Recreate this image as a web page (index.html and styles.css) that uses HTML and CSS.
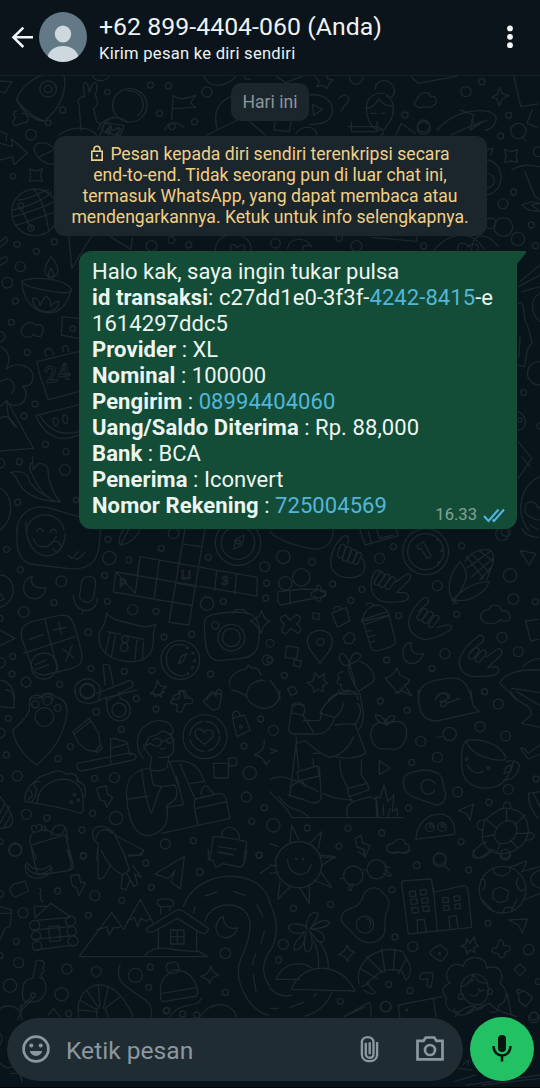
FILE: index.html
```html
<!DOCTYPE html>
<html lang="id">
<head>
<meta charset="utf-8">
<title>Chat</title>
<link rel="stylesheet" href="styles.css">
</head>
<body>
<div class="phone">
<svg class="wallpaper" viewBox="0 0 540 1088" aria-hidden="true">
<!-- top strip -->
<g transform="scale(.3444 .3333)">
<path d="M0 243l34 2-20 34-14-5M47 300c10-35 50-70 85-75 20-4 45-5 55 5 6 50-15 100-60 133Q90 350 47 300zM50 298c5 25 40 60 75 66M48 332c-12 5-8 18-2 22-12 6-10 20-2 24l20-8 15-4c6-10 0-30-15-25M235 390l-5-75c-8-10 0-28 15-24l-3-30c0-20 14-18 17 15l10-24c10-10 18 4 7 35 14 10 5 35-4 38l8 38c5 15 30 2 48-12M285 390c8-35 60-50 85-22M270 228c5 18 35 20 48 0M498 358l5-72c20 18 38 8 65 0l-15 22 15 14c-25 0-40 5-66 3M590 225c15 40 60 40 95 5M670 290c-45 20-50 60-38 100M480 390c5-30 40-25 55-5M712 228v10h15M800 228l30 20 50-20M915 230l12 15-8 15 20-4 10 10 8-18 10-8-16-4-4-10M1015 228c-3 30 35 36 40 0M900 285c35-5 65 15 65 45s-25 45-65 43M907 313l29 15-25 18zM985 295c15-22 36 0 25 10l-20 28M1065 310c15-40 65-42 75 0 10 40-20 85-40 80-25-5-40-40-35-80zM1090 268c-3-35 50-35 55 0 2 20-10 30-22 20M1060 325c20 5 35-20 40-28 10 15 25 22 42 22M1078 340h14m15 0h12M1210 300c10-30 40-25 40-10 20-10 20 25 10 25-10 15-25 5-28 5-20 10-40-10-22-20zM1194 230l20 20 115-22M1270 390c40-50 100-65 150-55 35 10 20 50-10 55M1335 330l40 15-10 45 35-25M1492 228l20 92 48-8M1545 330l-15 40 30 12M1450 262l10 20 18 5-20 10-8 20-8-20-14-5 16-8z"/>
<circle cx="140" cy="267" r="24"/><circle cx="140" cy="267" r="11"/><circle cx="312" cy="276" r="8"/><circle cx="377" cy="316" r="50"/><path d="M370 272c45 0 60 45 30 75"/><circle cx="437" cy="255" r="9"/><circle cx="489" cy="258" r="9"/><circle cx="182" cy="330" r="9"/><circle cx="463" cy="340" r="9"/><circle cx="565" cy="365" r="9"/><circle cx="601" cy="276" r="15"/><circle cx="1399" cy="245" r="9"/><circle cx="1353" cy="275" r="15"/><circle cx="1176" cy="345" r="9"/><circle cx="1230" cy="378" r="18"/><circle cx="1477" cy="346" r="9"/><circle cx="310" cy="385" r="14"/>
</g>
<!-- band around the notice -->
<g transform="translate(0 120) scale(.3444 .3333)">
<path d="M170 45C210 15 260 20 280 45M290 47l15-40 55 10-10 30M600 45L690 0M720 0l50 45M800 0l-5 30 45 5 5-30M860 40c20-30 60-20 60 5M1010 20h80c25 5 30 25 15 25M1020 5v30h75V5M1150 45l15-35 40 30M1310 45c25-15 80-35 105-45M1370 0l10 20 20-15M200 345l8 100 60-100M320 350l60 38 5-35M625 392c0-65 105-65 105 0M670 392c-5-25 15-20 18-8 15-18 30-5 20 8M835 385c5-35 55-35 70-5-20-10-30 0-25 12M1080 352l130 12v-14M1260 392c40-55 110-65 145-5M1330 392c-10-25 25-30 30-10 10-22 40-5 25 10"/>
<text x="303" y="42" font-size="34" transform="rotate(8 303 42)">4:2</text>
<circle cx="440" cy="378" r="16"/><circle cx="498" cy="360" r="10"/><circle cx="548" cy="375" r="9"/><circle cx="800" cy="370" r="14"/><circle cx="985" cy="355" r="9"/><circle cx="1035" cy="378" r="16"/><circle cx="1230" cy="378" r="9"/><circle cx="1230" cy="24" r="19"/><circle cx="140" cy="8" r="8"/><circle cx="500" cy="20" r="9"/>
</g>
<!-- left edge -->
<g transform="translate(0 70) scale(.3333)">
<path d="M0 220l38 10-4-24 48 42-40 36-4-24-38 10M0 183l20 10-2 18M102 240c0-30 40-25 60-5M102 240c10 30 40 45 58 42M116 262l44-22M88 297l19 6 20-6-5 19 5 19-20-4-19 4 4-18zM36 420c30-5 100-30 120-55M55 390c30 0 80-30 90-30M60 410c20 40 30 60 35 65M100 357c20 20 40 70 45 120M50 465c40-10 80-30 115-38M40 440c35-10 70-20 125-45M0 515l18-15 5 12-23 20M0 568l18-10 5 14-23 15M153 560c-20 30-28 55 0 62 30-6 25-35 0-62zM153 595c-12 20-8 30 0 35 10-6 12-18 0-35zM66 632c40-12 120-10 148 25 5 10-20 15-55 8-50-8-95-20-93-33zM66 632c0 70 50 100 90 96 30-5 50-35 58-70M98 685c15-5 20 10 22 22 5-12 12-25 20-28 12 12 15 20 12 30 8-12 15-15 25-14 0 20-20 32-40 30-25-3-40-20-39-40zM65 778c10-25 35-25 40-12 20-8 30 10 22 22 0 15-20 15-25 5-15 15-45 10-37-15zM235 745l-48-5-3 55 50 10M0 830c25 10 35 35 18 68 35-30 90-5 80 30-5 25-30 20-30 20 20 20 10 55-20 58-20 0-28-10-28-10M0 935c35-25 55 15 35 35M20 990l80 145-100 8M0 1010l20-18 5 50 20 30M0 1045c30-20 40 20 50 25M235 845l-125 30 8 35 27 80 90-25M140 860c-20-25 20-35 20-5M190 845c-10-25 18-25 15 0M235 1005l-128 32c30 70 80 80 128 58M120 1038c30 45 60 60 115 48M160 1058c-5-15 10-20 14-8 2 18-10 24-14 8zM188 1045c0-20 15-10 15 5 0 20-15 10-15-5zM95 1180c-15 10 0 30 5 40 20 50 60 80 82 75-20-15-25-40-35-65-5-20 2-40-14-45-15-10-28 0-33 15l-3-40M30 1208c25 10 20 25 30 37 20 30 60 50 122 50M30 1208c40-10 55 5 60 30 20 25 35 35 58 45M0 1255c40 20 45 90 0 125M50 1380c5-50 45-75 90-68l95 28M80 1380c10-60 100-60 112 0"/>
<text x="138" y="940" font-size="68" transform="rotate(-10 138 940)">24</text>
<circle cx="93" cy="194" r="16"/><circle cx="39" cy="319" r="8"/><circle cx="105" cy="427" r="70"/><circle cx="62" cy="408" r="9"/><circle cx="93" cy="474" r="9"/><circle cx="51" cy="523" r="9"/><circle cx="109" cy="544" r="9"/><circle cx="163" cy="515" r="9"/><circle cx="61" cy="590" r="15"/><circle cx="22" cy="638" r="16"/><circle cx="46" cy="693" r="9"/><circle cx="34" cy="757" r="9"/><circle cx="0" cy="800" r="15"/><circle cx="82" cy="847" r="9"/><circle cx="218" cy="776" r="8"/><circle cx="105" cy="1002" r="9"/><circle cx="72" cy="1038" r="9"/><circle cx="136" cy="1123" r="9"/><circle cx="198" cy="1145" r="9"/><circle cx="195" cy="1200" r="16"/><circle cx="58" cy="1175" r="9"/><circle cx="0" cy="1180" r="14"/><circle cx="53" cy="1297" r="9"/><circle cx="228" cy="1290" r="8"/>
</g>
<!-- right edge -->
<g transform="translate(440 70) scale(.3333)">
<path d="M193 238l20 7 20-6-5 20 5 18-20-4-18 4 3-20zM140 270c55 5 60 95 0 105M140 310c30 5 30 40 0 45M140 240l20-5-8 20M215 300c40-25 70-10 85-10M255 305c10 25 15 40 30 75l15 10M245 405l30-10 25 5-25 5 25 20-35-5zM240 635l60-50M235 650l65-35M245 665l55-15M235 700c20-10 15 30 20 50 20 40 15 60 22 65l-15 25-8 50-22-5M240 800l-3 60M300 670c-30 15-30 60 0 85M300 875c-50 0-50 70 0 70M235 1025c30 15 25 55 0 55M235 1115l40 50-40 60M245 1160l25 30M300 1220c-60 25-75 110-35 160M255 1320c0-35 35-30 38-5l7-5M255 1320c0 15 25 30 45 30M95 540c5-60 50-50 80-10"/>
<circle cx="235" cy="183" r="23"/><path d="M248 200l10 14"/><circle cx="182" cy="198" r="9"/><circle cx="221" cy="366" r="9"/><circle cx="189" cy="401" r="15"/><circle cx="190" cy="471" r="28"/><circle cx="234" cy="507" r="20"/><circle cx="152" cy="460" r="16"/><circle cx="274" cy="465" r="9"/><circle cx="286" cy="527" r="9"/><circle cx="295" cy="245" r="15"/><circle cx="251" cy="967" r="9"/><circle cx="240" cy="1050" r="6"/><circle cx="300" cy="1068" r="9"/><circle cx="198" cy="1385" r="14"/>
</g>
<!-- crossword, calculator, cat, camera -->
<g transform="translate(0 520) scale(.3333)">
<path d="M52 20c-5 60 0 100 40 112l115 14c60 5 85-25 90-65l5-60M78 5c-5 130 115 130 118 35M110 35c5-15 18-10 20 0M150 38c5-18 18-10 20 0M100 55c10 35 50 35 68-5M155 65c15-5 30 5 28 20-5 12-20 12-25 0M205 107l12 8 18-20M225 115l8 3 24-22M370 30c-15 20-15 40-8 45 25-2 45-20 60-48M400 0L362 75M348 156l422 72 2-56-352-62-14 110zM348 156l-8 60 232 40M478 122l-16 116M420 110l-8 55M555 25l-48 282 60 8 48-290M549 72l55 8M532 190l58 10M515 246l60 10M650 152l-6 60M710 162l-6 60M97 170c-30 5-35 50-10 62 25 12 50-5 50-30-20 5-50 0-40-32zM250 175c20-12 38-5 37 18l-6 38c-5 22-42 20-42-5l5-35q1-10 6-16zM220 225c0 60 70 60 72 12M250 270l-4 14M0 165c45 0 60 75 0 98M0 220l12 18-12 5M0 330l45 25-45 22M65 355c-5-30 5-40 30-50l80-18c30-5 40 5 50 35l20 75c5 30-5 40-30 48l-80 20c-30 0-35-10-45-40zM135 300l38 150M70 400l155-50M88 358l42-14M160 330l38-8m-22-16l8 38M190 388l32 26m-5-38l-20 48M106 434l34-14M106 450l40-16M320 278c10 15 18 18 30 22l70 18c18 5 30 0 48-4-10 20-8 30-8 50 0 50-40 65-80 60-60-5-90-40-82-85 10-20 18-20 22-61zM322 335l40 8m16 4l54 12M330 340l-14 60m30-55l-12 65m76-50l-5 60m25-55l-2 55M365 358c0-15 20-15 20 0s-20 12-20 0zM362 385c0-20 20-20 22-5 0 15-22 20-22 5zM535 430l8-20 18-10-10 22-14 8M615 300c5-15 30-20 85-24l40 2c30 10 40 30 38 60 0 60-20 75-60 78l-60 6c-30 0-40-30-42-60-3-30-5-45-1-62zM698 280c5-16 40-16 42 0M785 272c5 18 10 25 24 33-15 5-20 15-26 35-5-15-12-25-32-38 20-5 28-12 34-30zM472 480c6 16 10 22 28 20-15 8-18 18-16 32-10-12-20-10-34-10 12-10 20-20 22-42zM225 515c-5-30 35-50 60-30 20 15 20 30 10 55M310 435c10-5 20 0 20 10l10 50M310 435l5 60M290 520c40-15 70-25 95-38 20 0 15 18 8 20l-70 38M690 500c-10-35 30-50 50-55l5-10 10 10c15-5 20 0 28 20M740 530c0-35 20-45 45-50l10 5M0 480c30 5 45 30 42 60M90 540c0-15 30-20 35-5 10-20 30-15 35 5M520 540c-5-20 15-15 20-20 0-15 20-10 18 5l10 10M620 540c15-25 25-20 28-10 0-30 20-30 15 0"/>
<text x="358" y="200" font-size="34">P</text><text x="543" y="178" font-size="38">Li</text><text x="664" y="194" font-size="38">3</text>
<circle cx="20" cy="88" r="9"/><circle cx="61" cy="149" r="9"/><circle cx="184" cy="184" r="16"/><circle cx="162" cy="248" r="9"/><circle cx="71" cy="276" r="16"/><circle cx="324" cy="58" r="9"/><circle cx="328" cy="114" r="20"/><circle cx="387" cy="120" r="9"/><circle cx="314" cy="166" r="9"/><circle cx="322" cy="244" r="9"/><circle cx="398" cy="269" r="15"/><circle cx="468" cy="274" r="9"/><circle cx="484" cy="85" r="9"/><circle cx="521" cy="40" r="16"/><circle cx="625" cy="112" r="9"/><circle cx="621" cy="251" r="20"/><circle cx="670" cy="244" r="9"/><circle cx="714" cy="68" r="68"/><circle cx="714" cy="68" r="50"/><path d="M733 45l-8 32-24 10 6-30z"/><circle cx="715" cy="66" r="6"/><circle cx="794" cy="140" r="15"/><circle cx="797" cy="234" r="9"/><circle cx="800" cy="189" r="9"/><circle cx="265" cy="337" r="10"/><circle cx="492" cy="351" r="9"/><circle cx="575" cy="343" r="9"/><circle cx="541" cy="420" r="58"/><path d="M555 377c-40-15-60 20-55 50 5 35 40 45 55 38"/><circle cx="562" cy="383" r="3"/><circle cx="579" cy="400" r="3"/><circle cx="584" cy="422" r="3"/><circle cx="578" cy="442" r="3"/><circle cx="564" cy="461" r="3"/><circle cx="694" cy="353" r="40"/><circle cx="694" cy="353" r="27"/><circle cx="646" cy="316" r="11"/><circle cx="132" cy="438" r="39"/><circle cx="38" cy="409" r="9"/><circle cx="36" cy="462" r="9"/><circle cx="0" cy="428" r="16"/><circle cx="0" cy="295" r="9"/><circle cx="78" cy="486" r="15"/><circle cx="179" cy="493" r="9"/><circle cx="273" cy="445" r="9"/><circle cx="373" cy="454" r="9"/><circle cx="456" cy="451" r="9"/><circle cx="632" cy="462" r="9"/><circle cx="262" cy="512" r="22"/><circle cx="802" cy="420" r="15"/>
</g>
<!-- hands, corn, bottle -->
<g transform="translate(270 520) scale(.3333)">
<path d="M232 72c10-20-2-32-16-20-25 25-42 65-30 95 20 35 80 30 92 12 12-15 5-35-2-45M336 158c-8-12-22-8-26 6-10 20-8 50 5 65 20 25 55 18 90 14 14-5 14-20 0-25h-25l35-35c12-12 8-25-6-20l-30 22M445 275l25-22c14-15-2-28-14-15-20 20-42 50-40 75 3 25 25 45 55 45 30-5 50-15 70-28 10-12 0-18-14-14l-25 6M600 395l38-30c10-14-5-25-16-15-25 20-48 45-54 70-3 30 15 48 45 50 20 0 40 0 60-5 18-8 18-24 0-25l-20 2 40-36c8-14-5-26-15-16l-30 22"/>
<rect x="206" y="72" width="17" height="42" rx="8.500" transform="rotate(18 214 93)"/><rect x="222" y="80" width="17" height="44" rx="8.500" transform="rotate(20 230 102)"/><rect x="239" y="88" width="16" height="42" rx="8" transform="rotate(22 247 109)"/><rect x="255" y="96" width="15" height="38" rx="7.500" transform="rotate(24 262 115)"/>
<rect x="320" y="155" width="16" height="42" rx="8" transform="rotate(32 328 176)"/><rect x="336" y="160" width="16" height="44" rx="8" transform="rotate(34 344 182)"/><rect x="353" y="168" width="16" height="42" rx="8" transform="rotate(36 361 189)"/>
<rect x="448" y="263" width="17" height="40" rx="8.500" transform="rotate(38 456 283)"/><rect x="465" y="272" width="17" height="40" rx="8.500" transform="rotate(38 473 292)"/><rect x="483" y="283" width="16" height="42" rx="8" transform="rotate(38 491 304)"/>
<rect x="603" y="380" width="17" height="40" rx="8.500" transform="rotate(40 611 400)"/><rect x="624" y="387" width="17" height="42" rx="8.500" transform="rotate(40 632 408)"/>
<path d="M0 35c20 25 80 45 140 53 35-5 52-30 50-63M270 30l15 45 100-28-8-25M295 35l10 35m15-40l10 25 40-10M570 125c-30 35-45 85-20 115 20-15 40-60 40-75-5-20-10-30-20-40zM550 240c20-25 60-55 108-55-10 30-55 65-108 55zM585 125c15-25 40-40 75-35 20 15 10 40-10 90M590 110l50 65M605 100l50 55M625 90l45 35M660 95l-70 50M670 115l-65 55M665 140l-35 40M545 240l15 10M558 238l-8 15M750 92l48 8-20 35zM25 215l75-8c30 0 55 0 68 8-5 20-30 22-50 22l-85 18c-15-5-10-30-8-40zM60 212v35M143 195c12 0 10 15 10 20 20 0 20 15 0 16 0 20-15 15-15 0-20 0-22-14 0-18zM35 290l12-5 12 15 20-15c15 3 18 15 0 27 20 12 15 20 5 28l-22-15-15 17-12-5c0-15 8-20 8-25-12-8-15-12-8-22zM130 278l18 3-2 18-18-4zM185 280l43-18 12 40-38 20zM193 275c-5-20 20-20 18-6M275 305c5-25 15-40 35-48l20-2c10 5 22 15 28 30zM290 257c-5-10 15-10 22-2M275 300l78-25 5 12-75 27zM283 315l20 70c5 12 20 10 60-5 15-5 15-15 10-30l-15-60M290 335l15-4m-10 20l20-6m-13 22l12-4M632 292c0-20 15-22 25-24 5-20 35-15 38 5 25-5 35 25 15 30-15 5-15-5-20-5-10 20-55 15-58-6zM150 430c-20-30-38-45-38-65 0-45 75-45 75 0 0 20-15 35-37 65zM235 338l15 3 5 16-10 14-20-2-5-15zM50 378l35 5-5 32-35-2zM72 418l22 5-3 18-20-4zM423 367c-35 5-30 60 0 64 20 0 35-15 37-30-25 5-40-5-37-34zM135 458l12 15 16-12-2 20 12 8-15 8 2 18-16-8-12 10-4-18-16-10 17-6zM208 410c5-18 20-10 30 20 5-30 25-40 35-22-5 15-20 20-35 25-15 10-30-5-30-23zM240 435l15 55m-35-35c-20 0-18 20-10 20-15 10-10 18 5 20-10 15 10 20 25 15M270 425c30 10 50 40 40 60l-45 30c-15-25-30-60-30-80M175 540c15-20 40-28 80-25l10 25M380 445l10 20 28 15c0 10-5 10-15 15l20 30M345 475c15-5 25-10 35-30M345 475l40 45 15-20M52 505l20-6 10 20-18 8zM445 540c0-30 10-50 50-58 65-15 95-15 110 58M500 535c10-20 30-20 35 0M805 298l-38 5 15 60 23-5M690 490c10-25 50-45 120-40M690 490l50 50M725 505l85 12M760 440c10-15 25-22 50-25M0 480c15 20 30 40 30 60M55 505l12-6"/>
<circle cx="40" cy="111" r="20"/><circle cx="126" cy="125" r="10"/><circle cx="329" cy="115" r="15"/><circle cx="370" cy="80" r="9"/><circle cx="467" cy="95" r="69"/><circle cx="467" cy="95" r="54"/><path d="M440 78l20-12 24 42-12 8-20-32-6 4z"/><circle cx="515" cy="92" r="2"/><circle cx="505" cy="127" r="2"/><circle cx="503" cy="58" r="2"/><circle cx="575" cy="77" r="9"/><circle cx="697" cy="42" r="20"/><circle cx="720" cy="166" r="20"/><circle cx="730" cy="237" r="16"/><circle cx="796" cy="245" r="9"/><circle cx="502" cy="197" r="15"/><circle cx="276" cy="208" r="9"/><circle cx="188" cy="192" r="9"/><circle cx="243" cy="241" r="9"/><circle cx="46" cy="190" r="20"/><circle cx="94" cy="172" r="26"/><circle cx="386" cy="287" r="9"/><circle cx="560" cy="283" r="9"/><circle cx="151" cy="366" r="11"/><circle cx="0" cy="370" r="12"/><circle cx="0" cy="420" r="9"/><circle cx="43" cy="466" r="9"/><circle cx="350" cy="420" r="9"/><circle cx="486" cy="445" r="9"/><circle cx="525" cy="401" r="15"/><circle cx="696" cy="352" r="15"/><circle cx="745" cy="395" r="15"/><circle cx="644" cy="515" r="9"/><path d="M755 25c5 15 20 25 50 28M780 15l25 15"/>
</g>
<!-- barista, taco, shield -->
<g transform="translate(0 690) scale(.3333)">
<path d="M0 50l42 4V20c-5-15-15-20-25-22M90 25l30-2c10-18 35-18 45-3 20 5 40 15 35 55-10 70-45 110-90 150-35-25-65-60-72-105 15-15 40-30 50-60zM225 0c0 45 45 50 85 25L410 0M318 25l5 40c10 35 65 40 68-5 0-20-15-30-30-35l-5-20M218 125l50-40 28 45 5 35-15 20-25-5-25-20zM225 130l45-35M300 165l8 8-16 14-7-5M232 220l150-30c25-2 35 10 18 20l-155 33c-15 0-15-15-13-23zM332 205v-58l15-2c20 15 30 0 35 15l8 35M333 175l52-15M330 208l4 12M75 335c-5-40 30-60 45-75l35-12c15-10 30-5 45 5 30-10 40 20 30 20 20 5 30 15 25 45-10 0-5 25-5 45l-8 7C200 355 140 345 75 335zM112 340c0-50 45-75 88-72 30 5 45 25 50 55M95 335c10-10 15-25 15-40-15-10-10-22 10-20M85 330c20-20 10-15 5-30M290 295l28-8 5 25 15 10-18 30-5-18-15-5zM430 205c-25-30-25-80 10-100 25-20 75-20 80 20l-10 10c-15-15-25-15-40 0-10 5-20 0-25 10l-15 35M510 130c20 20 5 40 12 50-5 20-20 25-45 22M440 165l12-4 8 5M458 150c15-10 25-5 28 5l15-5c5-12 20-5 22 0M460 165c10 10 25 0 25-10M500 155c5 8 15 5 18-2M430 165c10 20 20 35 25 35l-5 35c10 12 45 8 52-5l5-30M480 175c10 5 15 0 15-3M445 235c-45 5-70 35-65 90 5 60 20 115 70 112 35-8 60-35 50-85l50-8-20-85M425 240c5 45 15 95 28 130 10-15 15-50 32-80l-25-5-10-50M380 328l65-10M508 215c60-10 90 10 105 60M540 222l45 105M510 218l25 70M570 280l45-5M485 290l40-5c10 20 5 40-2 45-20 20-30 15-20 25M485 430l205-45-12-60c-5-15-15-15-30-13l-60 15c-10 5-5 25 5 75M590 355l90-20M605 315c-5-15 5-25 15-28l20 22M460 5l5 15 30-15M515 28c20 0 20 2 25-10l-5-15 15 2 5 20c20-5 30 5 20 15l-20 2-10 25-15-3 2-20-20-5zM610 35l25-30 30 10-8 40-20 5zM695 0c25 5 40 15 45 20 10 25 50 45 70 30M698 85l35-10 18 45-40 20zM700 85c-10-25 20-30 20-5M640 220h45v44h-42zM685 205l22-2 5 22-24 3zM793 150c0 20 0 30-30 45 25 5 30 15 35 30l12-15M0 320c40 50 60 95 0 95M0 370l15-30M0 400l28-50M10 415l22-40M110 510L90 460c0-35 10-35 25-35 20-15 40 0 40 10M100 425c-15-20 5-25 10-10 0-18 15-15 15 0 5-15 15-5 10 10M95 465l100-30 22 75M155 435c-5-35 50-45 45 0l5 15M155 430c15 10 35 5 40-15M290 510l5-50c-20-10-25-45 0-50 20-5 40 10 55 28l80 42-5 15-40 3M288 445c5-25 30-35 50-15M345 435l35 75M630 510l10-70c10-2 60 5 100 15l-8 55M665 440c0-45 60-30 52 8M655 470l55 8m-55 10l42 6"/>
<circle cx="133" cy="81" r="28"/><circle cx="106" cy="43" r="11"/><circle cx="142" cy="33" r="13"/><circle cx="173" cy="54" r="10"/><circle cx="25" cy="85" r="9"/><circle cx="0" cy="129" r="15"/><circle cx="19" cy="195" r="9"/><circle cx="52" cy="258" r="15"/><circle cx="0" cy="265" r="9"/><circle cx="174" cy="206" r="9"/><circle cx="211" cy="170" r="9"/><circle cx="289" cy="65" r="10"/><circle cx="364" cy="118" r="9"/><circle cx="409" cy="26" r="9"/><circle cx="468" cy="57" r="9"/><circle cx="357" cy="60" r="21"/><circle cx="262" cy="5" r="22"/><circle cx="343" cy="263" r="15"/><circle cx="284" cy="265" r="9"/><circle cx="79" cy="373" r="15"/><circle cx="141" cy="384" r="9"/><circle cx="46" cy="479" r="20"/><circle cx="250" cy="497" r="9"/><circle cx="278" cy="370" r="9"/><circle cx="348" cy="384" r="20"/><circle cx="246" cy="420" r="9"/><circle cx="496" cy="462" r="15"/><circle cx="580" cy="452" r="9"/><circle cx="0" cy="455" r="9"/><circle cx="223" cy="314" r="4"/><circle cx="235" cy="331" r="4"/><circle cx="214" cy="337" r="4"/><circle cx="615" cy="140" r="66"/><circle cx="614" cy="139" r="45" stroke-dasharray="60 11"/><path d="M613 163c-18-15-28-22-28-34 5-18 24-12 28 0 5-14 25-12 27 2 0 12-10 20-27 32z"/><circle cx="722" cy="110" r="4"/><circle cx="782" cy="87" r="9"/><circle cx="732" cy="168" r="9"/><circle cx="749" cy="249" r="20"/><circle cx="739" cy="321" r="15"/><circle cx="793" cy="353" r="9"/><circle cx="755" cy="394" r="9"/><circle cx="778" cy="495" r="9"/>
</g>
<!-- walker, mug, turtle -->
<g transform="translate(270 690) scale(.3333)">
<path d="M30 0c0 25-10 45-30 52M0 190l22-8-22-5M205 0l5 12h35L270 10l10 60c0 25-5 40-12 48M205 10c-30 20-45 35-55 60l45 12c15-10 25-30 25-42M195 80c-10 30-25 52-50 52H65c-15-10-5-35-3-55l5-25c5-10 30-15 38 5l-5 20 30 50M100 92h50l5-25M70 70l30 5M65 45c10-10 25-8 38 0M195 105c20-2 50-8 60 0 15-20 25-55 5-65M255 100l32 90c-25 15-60 18-90 10M105 152c25 20 50 45 75 50 35-5 60-35 70-62M78 135l2 25 25-8M78 160l-18 155M78 160l8 75M130 205v25M130 190h25M82 245l60-17 5 30-60 15zM148 230l6 95c-10 20-30 15-50 5l-50-15M145 305l-60-30-25 15M0 270c20-15 50-10 65 0 25 5 35-5 40 20M0 305c35 40 60 55 65 78h335M25 320c40 50 60 30 90 60M160 310c40 20 50 15 85 20M210 210c0 40 5 50 22 80M275 208l-2 45 20 30M232 295l60-15 5 20-60 20zM238 318l10 17 52-15M250 335c-20 10-25 30-15 45M300 320l20 10 5 50M320 380l-2-60 12 5 12-40 12 50 18-20-5 50 15-10v25M340 345v30m20-20l-5 25M350 105c20-15 60-20 60 25-5 45-35 55-55 45-35 10-55-15-52-50 5-25 25-35 47-20zM350 105l-3-20M345 100c-15 0-30-10-28-25 15 0 28 10 28 25zM350 100c0-15 10-30 25-20-2 15-15 15-25 20zM375 10l20-8 30 15-12-17M445 0c0 60 5 90 55 93l128-28-20-20-5-45M495 30c10-35 55-20 40-5-10 5-20 20-25 10 20-5 25 5 15 15-10 0-15-2-12-8M530 40l40-15M328 212l32 22-32 20zM500 142l15-2M590 152c40-10 100 10 118 50 0 15-40 8-60 0-30-5-60-35-58-50zM590 152c-18 10-22 90-2 118 40 40 110 30 130-20l12-35M708 215c30-8 45 5 38 20-5 25-25 35-45 35M710 230l18-5-5 18-22 8zM592 225c10 20 30 30 48 18M400 280c0-25 10-30 35-35 30-10 50-5 70 5 20 20 10 30 22 60 0 25-10 35-30 35l-70-25c-20-10-25-20-27-40zM495 280c-20-20-45-10-40 15 5 25 35 20 38 5M565 362l45-20-10 50-10-22zM438 448c0-40 30-80 80-75 25 5 40 30 35 60zM645 390c30-25 50-40 70-35 45 5 60 35 60 70-5 40-35 60-70 65-40 5-60-15-68-45 0-25 3-40 8-55zM680 415c20-30 50-30 60-5 5 35-25 55-50 50-20-10-20-25-10-45zM700 350c0-20 25-20 22 5M645 390c-30-5-30 35-5 30M650 455c-25 10-50 35-40 48 20 5 40-10 55-25M695 490c-5 15 20 25 25 0M765 430c40-10 35 25 0 20M680 415l-30-25M710 395v-40M735 405l30-30M740 430h35M720 450l25 25M690 460l-10 28M672 435l-30 5M750 178c5-10 15 0 25 12l35-25M755 182l20 25 35-15M810 305l-35 5c0 40 15 60 30 75M790 310l20 40M720 0c10 25 30 35 55 50 25 30-10 35-20 50l55 12M740 5l70 42M380 450c20-8 25 5 25 12 20 0 15 25 0 25l-40 2c-20-5-20-25 0-27zM255 445l18-8 5 22 22 8-15 35-5-25-18-5zM15 510l5-10M20 500c25-60 110-60 130 0M0 460l25 10M60 460l5-55 22 45M120 460l35-35-10 50M150 500l45 5"/>
<circle cx="10" cy="121" r="15"/><circle cx="10" cy="406" r="20"/><circle cx="331" cy="33" r="9"/><circle cx="411" cy="61" r="9"/><circle cx="452" cy="154" r="15"/><circle cx="539" cy="132" r="20"/><circle cx="425" cy="217" r="9"/><circle cx="502" cy="202" r="15"/><circle cx="630" cy="110" r="15"/><circle cx="685" cy="42" r="15"/><circle cx="644" cy="5" r="9"/><circle cx="707" cy="138" r="15"/><circle cx="590" cy="206" r="4"/><circle cx="655" cy="235" r="4"/><circle cx="563" cy="306" r="15"/><circle cx="715" cy="298" r="15"/><circle cx="798" cy="267" r="9"/><circle cx="657" cy="337" r="9"/><circle cx="416" cy="354" r="9"/><circle cx="480" cy="412" r="13"/><circle cx="516" cy="411" r="13"/><circle cx="112" cy="414" r="9"/><circle cx="234" cy="415" r="9"/><circle cx="207" cy="469" r="9"/><circle cx="335" cy="429" r="9"/><circle cx="573" cy="455" r="9"/><circle cx="509" cy="506" r="18"/><circle cx="484" cy="408" r="5"/><circle cx="518" cy="407" r="5"/>
</g>
<!-- cabin, mountains, road -->
<g transform="translate(0 850) scale(.3333)">
<path d="M95 0c10 40 12 65 20 75l85-12c20-5 15-30 0-63M205 0l15 45c0 15-10 15-20 18M80 40c10 10 25 20 45 18 20-5 25-15 25-10 10 0 10 25-25 35-30 8-55-10-48-40M80 50c10 25 50 30 72 5M293 0l2 85c20 10 25-25 38-40M303 0c20 40 35 60 65 75l20-15L370 5M385 15c20 0 40 5 45-15M368 75l-5 40 15 5 12-30 12 20 10-8-8-30 20 10-25-35M380 70l20 35M465 72l88-53-12 97-28-20 12-35-20 25zM625 0v28l15 5 8 20 20-12 52 10c15 0 18-30 20-50M655 5l45 10M780 70l30-20M30 115l10-12 35-10 10 30-40 18c-10-5-15-15-15-26zM212 80c5-8 15-5 25-6l5 22 15 3-20 38-8-25-12-5zM118 115c15 5-5 15 5 22-5 10 5 15 5 20M105 205l-2-36h35M108 200l45-40 58 40M100 212l110-10M100 240l110-10M100 268l110-10M105 300l110-14M145 230l32-3 5 45-32 3zM0 170l35 10-5 50-15 5L0 270M0 190h30M237 320l98-132 36 50 50-90 38 70M237 320h385l-30-18M290 240l15-5 15-5 8 25 12-22 15 0 10-5M380 215l15-8 8-5 10 28 10-25 15 8 10-5M475 150c15-5 40-5 45 5 5 12-5 15-12 15h-28c-10-5-10-15-5-20zM482 170v22M510 170v10M440 235l90-55c10-5 15 0 95 55 0 15-15 20-25 12l-68-42-75 42c-15 0-20-5-17-12zM475 240v55M590 245v55M435 315c30-30 60-20 100-15l55 5M512 240h40v42h-40zM532 240v42M512 260h40M550 170c40-120 240-120 260-10M615 215c20-75 145-65 135 20-5 70-35 80-35 130 0 50 40 120 90 130M810 300c-30 50-20 80 0 110M580 190l5-20M615 138l35-12M700 124l35 12M770 165c10 15 15 20 18 35M793 245l-10 35M768 310c-8 15-10 25-9 35M760 375l8 50M670 200c-30 10-30 60 5 64 20 0 35-15 37-30-25 5-40-5-42-34zM632 348c5 18 10 20 25 28-20 3-25 10-28 25-5-15-12-15-27-22 18-5 25-10 30-31zM108 335c5-8 22-5 25 5l-5 15 5 8-10 10 5 15M108 335l-10 50c-20 0-30 15-30 40-5 30 10 35 35 30 20 0 35-20 35-45 0-20-10-25-20-28M95 440L60 475M100 445l-35 35M0 475c30-15 65-5 65 35M145 495l15-20 20 25M237 500c-10-45 10-80 50-95 40-5 75 25 90 55 15 20 22 30 20 40M237 480l55 5M240 450l50 30M262 425l35 50M295 405l5 65M325 410l-15 65M360 440l-45 35M290 475v25M315 475l10 25M360 345c-20 55 30 70 60 95 30 15 35 30 35 60M482 430c-5-40 20-60 40-70 40 0 60 25 68 50 5 15 5 20 0 28l-100 17c-12-5-8-15-8-25zM485 430l105-17M500 355c-5-15 10-20 15-15 10-10 20 0 20 10 10 10-5 20-15 20-15 0-20-5-20-15M510 500c30-50 80-20 95-55M600 500c20-40 90-55 110 0"/>
<circle cx="46" cy="0" r="18"/><circle cx="0" cy="132" r="10"/><circle cx="173" cy="123" r="9"/><circle cx="250" cy="18" r="9"/><circle cx="285" cy="137" r="15"/><circle cx="265" cy="196" r="9"/><circle cx="437" cy="39" r="9"/><circle cx="454" cy="112" r="9"/><circle cx="365" cy="151" r="9"/><circle cx="599" cy="66" r="10"/><circle cx="777" cy="16" r="9"/><circle cx="69" cy="188" r="15"/><circle cx="49" cy="274" r="9"/><circle cx="56" cy="338" r="15"/><circle cx="0" cy="317" r="9"/><circle cx="30" cy="407" r="20"/><circle cx="185" cy="433" r="20"/><circle cx="201" cy="357" r="15"/><circle cx="289" cy="364" r="15"/><circle cx="406" cy="376" r="21"/><circle cx="451" cy="351" r="9"/><circle cx="446" cy="412" r="9"/><circle cx="206" cy="491" r="9"/><circle cx="499" cy="483" r="9"/><circle cx="676" cy="427" r="9"/><circle cx="676" cy="310" r="16"/><circle cx="99" cy="436" r="7"/><circle cx="104" cy="226" r="15"/><circle cx="108" cy="257" r="14"/><circle cx="111" cy="288" r="14"/><circle cx="212" cy="213" r="15"/><circle cx="215" cy="244" r="14"/><circle cx="219" cy="273" r="15"/><circle cx="548" cy="492" r="9"/><circle cx="590" cy="495" r="9"/>
</g>
<!-- sun, island, buildings, ball -->
<g transform="translate(270 850) scale(.3333)">
<path d="M0 45l18 3M0 70l22-3M30 95l-6 52 35-35M90 115l28 45v-50M130 90l55 22-35-50M150 15l45 5-38 25M53 28c0 55 65 60 70 15M0 160c25 50 25 100 0 145M280 58l12 4M345 48l14 5M340 70l20 10 5-5-20-15M220 85h-8M240 100l-5 20 8 2 5-20M275 150c15-50 55-40 65-20 25 20 20 40 8 60-8 30 5 60-15 75-30 25-65 10-85-15-20-25-50-35-25-65 20-15 40-10 52-35zM395 100c0-10 5-8 15-8l70-5c8 0 5 10 10 40l90-20c12 0 12 5 15 20l10 105-190 20zM490 115l12 128M443 245l-2-35 22-2 5 36M540 235l-3-35 22-3 5 36M418 125l18-2 2 15-18 2zM450 120l18-2 2 15-18 2zM422 148l18-2 2 15-18 2zM455 145l18-2 2 15-18 2zM425 174l18-2 2 15-18 2zM458 170l18-2 2 15-18 2zM518 144l16-2 2 14-16 2zM552 139l16-2 2 14-16 2zM520 168l16-2 2 14-16 2zM554 163l16-2 2 14-16 2zM670 120l22-9 24 13-6 28-24 6-18-14zM668 55l8 18 25 5 18-12 2-12M632 90c20-10 15 25 5 30M637 150l30 30M746 82c-12 15-8 30 8 42l12-8M740 150l-15 30M700 187l5-15 25 0M720 50c20 0 40-20 50-15l-10 25M755 65l55-15M810 60c-40 15-35 45 0 55M760 150l50-20M715 210l57-3-15 43-12-25zM590 265l10 15 12-20 5 20 8 8-15 5 5 15-15-8-10 12-3-18-15-5 16-8zM688 270c15 0 12 10 12 18 25-5 30 15 5 18 5 20-20 22-20 5-25 0-25-18-5-18zM512 284l22 20c0 10-10 20-20 30-15-5-25-12-35-25 5-10 20-20 33-25zM732 358l18-17 18 18-18 18zM745 430l18-8 25 20-20 28-20-15zM743 430c-10-12 10-15 12-5M112 240c-10-20 10-65 32-50-2 20-20 40-25 48 25-30 55-30 60-20-10 20-40 15-55 20 30 0 45 20 35 38-20 5-30-25-40-32 15 35 5 60-8 62-15-10-5-50-2-60-5 30-15 55-35 55-10-20 20-40 30-55-25 10-50 0-48-15 5-15 40-10 56 3M133 275c10 25 15 45 12 78M150 278c20 25 25 50 25 75M65 418c30-85 150-85 190 5zM18 388c25-60 85-50 105-35M18 388h70M0 415c25 25 50 25 65 20M0 475h25M60 472l40-15M130 440l10-10M185 428c-15 35-40 60-80 70M232 285c5 15 8 18 23 22-15 5-20 15-22 28-5-15-12-18-27-22 15-5 20-12 26-28zM267 400c-15-70 65-120 130-95l15 25c15 20 10 50-5 60l-10-25c-25-10-50-5-65 0l-42 35 25 25c0 10-10 10-35-5M270 355l50 30M290 320l48 48M335 297l10 70M375 297l-5 65M410 325l-25 45M275 410l20-10M450 378c5-15 25-10 38-8 5 15-5 30-5 42l-12-3 2-24c-15 8-25 3-23-7zM530 445c-20-20-10-40 10-45-30-30 10-75 40-50 5-40 75-35 70 5 40-15 55 20 40 45 30 25 20 60-5 65 5 20-10 25-25 20M530 445c-10 20 10 45 35 40M575 430c-20-60 75-85 80-15 5 60-60 65-80 15M575 410c20-5 30-20 35-35 10 20 25 25 42 25M595 395l15-5M625 415l5 10 12-5M600 435c10 5 20 5 25-5M555 500c20-25 45-35 60-30l10 10 30-20c15 5 20 20 40 25l45 15M385 465l130-25M385 465l5 40M490 445l8 55M712 430l12 65M222 500l75-42c10 5 5 25 5 42M222 500l60-28M265 5l15 10 5-15M350 0c5 10 20 10 30 5l25 5c10-3 15-5 15-10M610 0c0 30 30 30 45 10l20-10M520 45l18 15"/>
<circle cx="86" cy="44" r="69"/><circle cx="250" cy="77" r="29"/><circle cx="320" cy="58" r="29"/><circle cx="285" cy="224" r="26"/><path d="M290 205c15 5 15 20 8 27"/><circle cx="79" cy="27" r="2"/><circle cx="99" cy="27" r="2"/><circle cx="70" cy="175" r="9"/><circle cx="182" cy="163" r="9"/><circle cx="40" cy="283" r="15"/><circle cx="26" cy="330" r="9"/><circle cx="366" cy="119" r="9"/><circle cx="375" cy="261" r="9"/><circle cx="428" cy="290" r="15"/><circle cx="440" cy="46" r="10"/><circle cx="509" cy="30" r="20"/><circle cx="596" cy="60" r="9"/><circle cx="654" cy="220" r="9"/><circle cx="698" cy="119" r="70"/><circle cx="776" cy="299" r="16"/><circle cx="509" cy="311" r="3"/><circle cx="356" cy="403" r="9"/><circle cx="420" cy="422" r="9"/><circle cx="211" cy="454" r="9"/><circle cx="347" cy="469" r="15"/><circle cx="805" cy="395" r="9"/><circle cx="573" cy="440" r="8"/><circle cx="660" cy="425" r="8"/><circle cx="706" cy="14" r="16"/><circle cx="410" cy="480" r="3"/><circle cx="792" cy="498" r="12"/>
</g>
<!-- around the composer -->
<g transform="translate(0 1005) scale(.3444 .3333)">
<path d="M0 175c20 20 30 15 45 5M30 205l25 0 10 25-5-25M0 85c10 10 5 25 0 35M60 0c5 20 0 30-10 45M1355 25l25-20M1320 10c-5 20 20 25 40 15l45-25M1345 178l15-12v15M1355 240l213-30M1400 240l168-20M1330 190l40 5M1320 230l60-20"/>
<circle cx="1550" cy="38" r="15"/><circle cx="1120" cy="5" r="16"/><circle cx="484" cy="16" r="9"/>
</g>
</svg>
<header class="topbar">
<svg class="back" viewBox="0 0 24 24"><path d="M22 12.3H2.5M12.3 2.6L2.5 12.3l9.8 9.7"/></svg>
<svg class="avatar" viewBox="0 0 48 50" preserveAspectRatio="none"><clipPath id="face"><ellipse cx="24" cy="25" rx="24" ry="25"/></clipPath><g clip-path="url(#face)"><path fill="#637985" d="M0 0h48v50H0z"/><ellipse cx="24" cy="22" rx="8.2" ry="8.6" fill="#ced8df"/><path fill="#ced8df" d="M8 46c2-8 8-12 16-12s14 4 16 12v4H8z"/></g></svg>
<div class="who"><div class="title">+62 899-4404-060 (Anda)</div><div class="subtitle">Kirim pesan ke diri sendiri</div></div>
<svg class="more" viewBox="0 0 6 24"><circle cx="3" cy="3.4" r="2.9"/><circle cx="3" cy="11.8" r="2.9"/><circle cx="3" cy="20.2" r="2.9"/></svg>
</header>
<main class="chat">
<div class="day">Hari ini</div>
<div class="notice"><svg class="lock" viewBox="0 0 14 17"><path d="M1.8 6.2h10.4v8.9H1.8zM4 6V4.2C4 .2 10 .2 10 4.2V6"/><circle cx="7" cy="10.6" r="1.2"/></svg>Pesan kepada diri sendiri terenkripsi secara<br>end-to-end. Tidak seorang pun di luar chat ini,<br>termasuk WhatsApp, yang dapat membaca atau<br>mendengarkannya. Ketuk untuk info selengkapnya.</div>
<div class="bubble">
<svg class="tail" viewBox="0 0 20 16"><path d="M0 0h17.500c2 0 2 1.500 1 2.600L10 13v3H0z"/></svg>
<div class="message">Halo kak, saya ingin tukar pulsa<br><b>id transaksi</b>: <span class="digits">c27dd1e0-3f3f-<span class="link">4242-8415</span>-e</span><br><span class="digits">1614297ddc5</span><br><b>Provider</b> : XL<br><b>Nominal</b> : <span class="digits">100000</span><br><b>Pengirim</b> : <span class="link digits">08994404060</span><br><b>Uang/Saldo Diterima</b> : <span class="digits">Rp. 88,000</span><br><b>Bank</b> : BCA<br><b>Penerima</b> : Iconvert<br><b>Nomor Rekening</b> : <span class="link digits">725004569</span></div>
<div class="meta"><span>16.33</span><svg class="ticks" viewBox="0 0 22 15"><path d="M1 8l4.500 5L15.500 1.500M9.500 11.500l1.500 1.500L21 1.500"/></svg></div>
</div>
</main>
<footer class="composer">
<div class="field">
<svg class="smile" viewBox="0 0 28 28"><circle cx="14" cy="14" r="12.400" fill="none" stroke="#8b989f" stroke-width="2.700"/><circle cx="9.300" cy="10.600" r="2"/><circle cx="18.700" cy="10.600" r="2"/><path d="M7.800 16h12.400c-.7 3-3 4.900-6.200 4.900S8.500 19 7.800 16z"/></svg>
<span class="placeholder">Ketik pesan</span>
<svg class="clip" viewBox="0 0 20 28"><path d="M18 6.500v13.500c0 9-16 9-16 0V7c0-7.300 12.200-7.300 12.200 0v12.500c0 5-8.100 5-8.100 0V7.500M10.200 7v12.500"/></svg>
<svg class="camera" viewBox="0 0 28 25"><path d="M1.500 4.800h6L9.800 1.500h8.400l2.300 3.300h6v18.600h-25z"/><circle cx="14" cy="14" r="5"/></svg>
</div>
<div class="mic"><svg viewBox="0 0 20 27"><rect x="6" y="0" width="8" height="17" rx="4"/><path d="M1.500 11c0 12.500 17 12.500 17 0M10 20.500v6" fill="none" stroke="#07130d" stroke-width="2.500"/></svg></div>
</footer>
</div>
</body>
</html>
```
FILE: styles.css
```css
* { box-sizing: border-box; }
body { margin: 0; background: #08131a; font-family: Roboto, "Liberation Sans", sans-serif; }
.phone { position: relative; display: flex; flex-direction: column; width: 540px; height: 1088px; overflow: hidden; background: #08131a; }
.wallpaper { position: absolute; inset: 0; width: 540px; height: 1088px; fill: none; stroke: #1c272d; stroke-width: 4; stroke-linecap: round; stroke-linejoin: round; }
.wallpaper text { stroke-width: 3; font-family: Roboto, sans-serif; font-weight: 500; }
.topbar { position: relative; display: flex; align-items: center; height: 76px; padding: 0 27px 2px 11px; background: #0b141b; border-bottom: 1px solid #141e25; color: #eef2f4; }
.back { width: 24px; height: 24px; margin-right: 4px; fill: none; stroke: #f3f6f7; stroke-width: 2.6; }
.avatar { width: 48px; height: 50px; margin-top: 1px; }
.who { flex: 1; padding: 3px 0 0 12px; white-space: nowrap; }
.title { font-size: 24.8px; line-height: 30px; letter-spacing: .05px; }
.subtitle { margin-top: 1px; font-size: 16.6px; line-height: 22px; letter-spacing: .25px; }
.more { width: 6px; height: 24px; fill: #f3f6f7; }
.chat { position: relative; flex: 1; display: flex; flex-direction: column; align-items: center; padding-top: 7px; }
.day { width: 78px; height: 38px; border-radius: 10px; background: #1b262c; color: #8a969c; font-size: 17.6px; line-height: 38px; text-align: center; white-space: nowrap; }
.notice { width: 433px; height: 100px; margin-top: 15px; padding-top: 8px; border-radius: 11px; background: #1b262c; color: #f2cf86; font-size: 17.6px; line-height: 21px; text-align: center; white-space: nowrap; }
.lock { width: 14px; height: 17px; margin-right: 6px; vertical-align: -2px; fill: none; stroke: #f2cf86; stroke-width: 1.6; }
.lock circle { fill: #f2cf86; stroke: none; }
.bubble { position: relative; align-self: flex-start; width: 438px; height: 278px; margin: 15px 0 0 79px; padding: 8px 13px; border-radius: 12px; border-top-right-radius: 0; background: #144d37; color: #edf5f1; }
.tail { position: absolute; top: 0; right: -10px; width: 20px; height: 16px; fill: #144d37; }
.message { font-size: 22px; line-height: 26px; white-space: nowrap; }
.message b { font-weight: 700; letter-spacing: .1px; }
.digits { letter-spacing: .07px; }
.link { color: #53b6dc; }
.meta { position: absolute; right: 12px; bottom: 3px; display: flex; align-items: center; gap: 6px; color: #84a297; font-size: 16.6px; line-height: 22px; }
.ticks { width: 22px; height: 15px; fill: none; stroke: #53b6e2; stroke-width: 2; }
.composer { position: relative; display: flex; align-items: center; gap: 7px; height: 71px; padding: 0 6px 6px 7px; border-bottom: 1px solid #010405; }
.field { display: flex; align-items: center; width: 456px; height: 63px; padding: 0 19px 0 15px; border-radius: 32px; background: #1f2c33; color: #8b989f; }
.smile { width: 28px; height: 28px; fill: #8b989f; }
.placeholder { flex: 1; padding: 2px 0 0 16px; font-size: 24.6px; }
.clip { width: 19px; height: 28px; margin-right: 37px; fill: none; stroke: #8b989f; stroke-width: 2.5; }
.camera { width: 28px; height: 25px; margin-top: -2px; fill: none; stroke: #8b989f; stroke-width: 2.7; }
.mic { display: flex; align-items: center; justify-content: center; width: 64px; height: 64px; border-radius: 50%; background: #22c163; }
.mic svg { width: 20px; height: 27px; margin-top: -2px; fill: #07130d; }
```
